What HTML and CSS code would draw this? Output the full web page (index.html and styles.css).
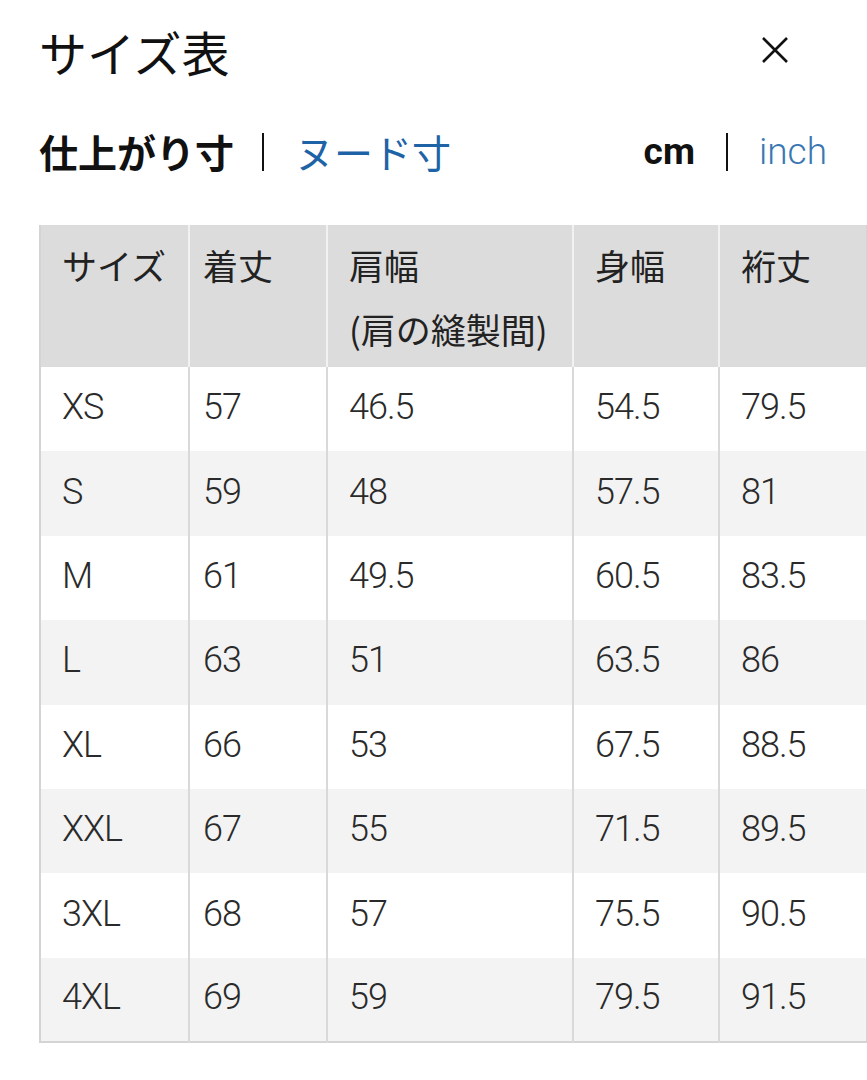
FILE: index.html
```html
<!DOCTYPE html>
<html lang="ja">
<head>
<meta charset="utf-8">
<title>サイズ表</title>
<link rel="stylesheet" href="styles.css">
</head>
<body>
<div class="page">
  <div class="title-bar">
    <h1 class="title">サイズ表</h1>
    <button class="close" aria-label="閉じる">
      <svg width="28" height="28" viewBox="0 0 28 28"><path d="M2 2 L26 26 M26 2 L2 26" stroke="#111" stroke-width="2.6" fill="none"/></svg>
    </button>
  </div>
  <div class="toggles">
    <div class="toggle-group">
      <span class="opt active jp">仕上がり寸</span>
      <span class="sep"></span>
      <span class="opt link jp">ヌード寸</span>
    </div>
    <div class="toggle-group unit">
      <span class="opt active en">cm</span>
      <span class="sep"></span>
      <span class="opt link en light">inch</span>
    </div>
  </div>
  <table class="size-table">
    <colgroup>
      <col class="c1"><col class="c2"><col class="c3"><col class="c4"><col class="c5">
    </colgroup>
    <thead>
      <tr>
        <th>サイズ</th>
        <th class="tight">着丈</th>
        <th>肩幅<br>(肩の縫製間)</th>
        <th>身幅</th>
        <th>裄丈</th>
      </tr>
    </thead>
    <tbody>
      <tr><td>XS</td><td class="tight">57</td><td>46.5</td><td>54.5</td><td>79.5</td></tr>
      <tr><td>S</td><td class="tight">59</td><td>48</td><td>57.5</td><td>81</td></tr>
      <tr><td>M</td><td class="tight">61</td><td>49.5</td><td>60.5</td><td>83.5</td></tr>
      <tr><td>L</td><td class="tight">63</td><td>51</td><td>63.5</td><td>86</td></tr>
      <tr><td>XL</td><td class="tight">66</td><td>53</td><td>67.5</td><td>88.5</td></tr>
      <tr><td>XXL</td><td class="tight">67</td><td>55</td><td>71.5</td><td>89.5</td></tr>
      <tr><td>3XL</td><td class="tight">68</td><td>57</td><td>75.5</td><td>90.5</td></tr>
      <tr><td>4XL</td><td class="tight">69</td><td>59</td><td>79.5</td><td>91.5</td></tr>
    </tbody>
  </table>
</div>
</body>
</html>
```
FILE: styles.css
```css
* { box-sizing: border-box; }
html, body { margin: 0; padding: 0; background: #fff; }
body {
  font-family: "Noto Sans CJK JP", "Noto Sans", sans-serif;
  color: #222;
  width: 867px;
  overflow: hidden;
}
.page {
  padding: 27px 0 0 39px;
}
.title-bar {
  display: flex;
  justify-content: space-between;
  align-items: flex-start;
  padding-right: 78px;
  height: 105px;
}
.title {
  margin: 0;
  font-size: 48px;
  line-height: 48px;
  font-weight: 400;
  color: #111;
}
.close {
  border: 0;
  background: none;
  padding: 0;
  margin-top: 9px;
  width: 28px;
  height: 28px;
  cursor: pointer;
}
.close svg { display: block; }
.toggles {
  display: flex;
  justify-content: space-between;
  align-items: center;
  padding-right: 40px;
  height: 39px;
}
.toggle-group {
  display: flex;
  align-items: center;
}
.opt.jp {
  font-size: 39px;
  line-height: 39px;
}
.opt.en {
  font-family: "Roboto", "Liberation Sans", sans-serif;
  font-size: 37px;
  line-height: 39px;
}
.opt.active {
  font-weight: 700;
  color: #111;
}
.opt.link { color: #1d63a6; }
.opt.light { font-weight: 300; color: #3a77b2; }
.sep {
  display: block;
  width: 2px;
  height: 38px;
  background: #111;
  margin: 0 31px 0 28px;
}
.unit .sep { margin: 0 31px 0 31px; }
.size-table {
  margin-top: 54px;
  border-collapse: collapse;
  table-layout: fixed;
  width: 827px;
  border-left: 2px solid #d4d4d4;
  border-right: 2px solid #d4d4d4;
  border-bottom: 2px solid #d4d4d4;
}
col.c1 { width: 149px; }
col.c2 { width: 138px; }
col.c3 { width: 246px; }
col.c4 { width: 146px; }
col.c5 { width: 148px; }
.size-table th,
.size-table td {
  text-align: left;
  padding: 0 0 0 21px;
  border-left: 2px solid #d9d9d9;
  color: #2a2a2a;
}
.size-table th:first-child,
.size-table td:first-child { border-left: 0; padding-left: 21px; }
.size-table .tight { padding-left: 13px; }
.size-table thead th {
  background: #dcdcdc;
  font-weight: 400;
  font-size: 35px;
  line-height: 64px;
  height: 142px;
  vertical-align: top;
  padding-top: 8px;
  color: #222;
  border-left-color: #f2f2f2;
}
.size-table thead th:first-child { border-left: 0; }
.size-table tbody td {
  height: 84.4px;
  font-family: "Roboto", "Noto Sans", sans-serif;
  font-weight: 300;
  font-size: 36px;
  letter-spacing: -1px;
  vertical-align: middle;
  padding-bottom: 4px;
}
.size-table tbody tr:nth-child(odd) td { background: #fff; }
.size-table tbody tr:nth-child(even) td { background: #f3f3f3; }
```
